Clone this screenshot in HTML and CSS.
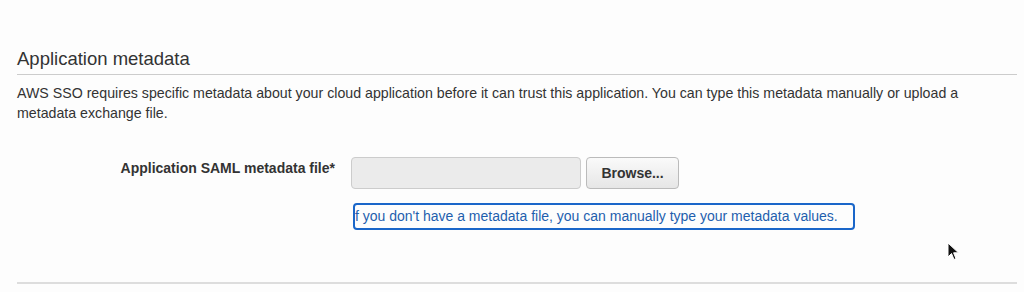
FILE: index.html
```html
<!DOCTYPE html>
<html lang="en">
<head>
  <meta charset="UTF-8" />
  <title>Application metadata</title>
  <link rel="stylesheet" href="styles.css">
</head>
<body>
  <div class="section">
    <h2 class="section-title">Application metadata</h2>
    <p class="section-desc">AWS SSO requires specific metadata about your cloud application before it can trust this application. You can type this metadata manually or upload a metadata exchange file.</p>

    <div class="form-row">
      <label class="form-label">Application SAML metadata file*</label>
      <div class="file-field">
        <div class="file-input"></div>
        <button class="browse-btn">Browse...</button>
      </div>
    </div>

    <div class="form-row">
      <div class="form-label"></div>
      <a class="manual-link" href="#"><span>If you don't have a metadata file, you can manually type your metadata values.</span></a>
    </div>

    <div class="section-end"></div>
  </div>

  <svg class="cursor" width="14" height="20" viewBox="0 0 14 20">
    <path d="M1 1 L1 15 L4.5 11.5 L7 17.5 L9 16.6 L6.6 10.8 L11.5 10.8 Z" fill="#111" stroke="#fff" stroke-width="1"/>
  </svg>
</body>
</html>
```

FILE: styles.css
```css
body {
  margin: 0;
  background: #fdfdfd;
  font-family: "Liberation Sans", Arial, sans-serif;
  color: #333;
}

.section {
  padding: 0 7px 0 17px;
}

.section-title {
  margin: 0;
  padding-top: 48px;
  padding-bottom: 4px;
  font-size: 18.5px;
  font-weight: normal;
  line-height: 22px;
  color: #333;
  border-bottom: 1px solid #ccc;
}

.section-desc {
  margin: 8px 0 0;
  font-size: 14.2px;
  line-height: 20px;
  color: #333;
}

.form-row {
  display: flex;
  align-items: center;
  margin-top: 34px;
}

.form-row + .form-row {
  margin-top: 14px;
}

.form-label {
  width: 318px;
  flex-shrink: 0;
  text-align: right;
  font-size: 14px;
  font-weight: bold;
  color: #333;
  margin-right: 16px;
  padding-bottom: 10px;
}

.file-field {
  display: flex;
  gap: 5px;
}

.file-input {
  width: 228px;
  height: 30px;
  background: #ebebeb;
  border: 1px solid #ccc;
  border-radius: 4px;
}

.browse-btn {
  width: 93px;
  height: 32px;
  font-family: "Liberation Sans", Arial, sans-serif;
  font-size: 14px;
  font-weight: bold;
  color: #333;
  background: linear-gradient(#fafafa, #e6e6e6);
  border: 1px solid #bbb;
  border-radius: 4px;
  padding: 0;
}

.manual-link {
  display: block;
  margin-left: 2px;
  width: 498px;
  height: 23px;
  border: 2px solid #1a66c9;
  border-radius: 4px;
  overflow: hidden;
  white-space: nowrap;
  font-size: 14px;
  line-height: 23px;
  color: #1f5fae;
  text-decoration: none;
}

.manual-link span {
  display: inline-block;
  margin-left: -4px;
}

.section-end {
  margin-top: 52px;
  border-bottom: 2px solid #ddd;
}

.cursor {
  position: absolute;
  left: 947px;
  top: 242px;
}
```
